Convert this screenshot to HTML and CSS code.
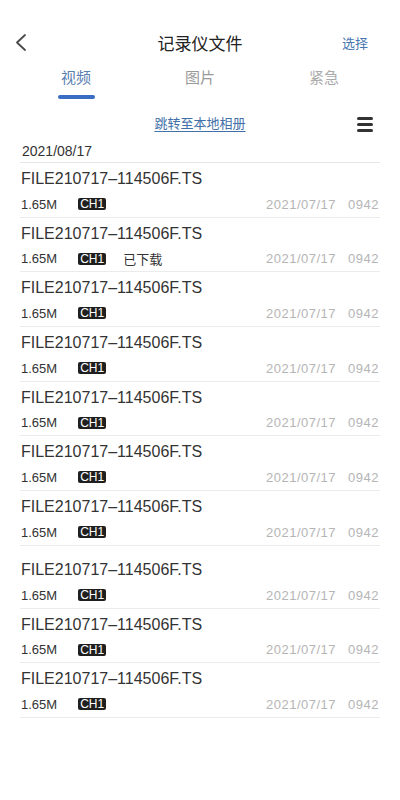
FILE: index.html
```html
<!DOCTYPE html>
<html lang="zh-CN">
<head>
    <meta charset="UTF-8">
    <title>记录仪文件</title>
    <link rel="stylesheet" href="styles.css">
</head>
<body>
<div id="page">
    <div class="nav">
        <a class="back">
            <svg width="11" height="17" viewBox="0 0 11 17"><path d="M10 1 L2 8.5 L10 16" fill="none" stroke="#4a4a4a" stroke-width="1.8" stroke-linecap="round" stroke-linejoin="round"/></svg>
        </a>
        <div class="title">记录仪文件</div>
        <a class="select">选择</a>
    </div>
    <div class="tabs">
        <div class="tab active">视频<i></i></div>
        <div class="tab">图片</div>
        <div class="tab light">紧急</div>
    </div>
    <div class="link-row">
        <span></span>
        <a class="album">跳转至本地相册</a>
        <div class="menu"><i></i><i></i><i></i></div>
    </div>
    <div class="day">2021/08/17</div>
    <div id="list"></div>
</div>
<script>
var files = [
  { dl: false }, { dl: true }, { dl: false }, { dl: false }, { dl: false },
  { dl: false }, { dl: false }, { dl: false, gap: true }, { dl: false }, { dl: false }
];
var list = document.getElementById('list');
files.forEach(function (f) {
  var row = document.createElement('div');
  row.className = 'file-row' + (f.gap ? ' gap' : '');
  row.innerHTML =
    '<div class="name">FILE210717–114506F.TS</div>' +
    '<div class="meta">' +
      '<span class="size">1.65M</span>' +
      '<span class="ch">CH1</span>' +
      (f.dl ? '<span class="dl">已下载</span>' : '') +
      '<span class="time"><span>2021/07/17</span><span>0942</span></span>' +
    '</div>';
  list.appendChild(row);
});
</script>
</body>
</html>
```

FILE: styles.css
```css
* {
    margin: 0;
    padding: 0;
    box-sizing: border-box;
}
html, body {
    height: 100%;
    background: #fff;
}
body {
    font-family: "Liberation Sans", "Noto Sans CJK SC", sans-serif;
    color: #333;
}
.nav {
    display: grid;
    grid-template-columns: 1fr auto 1fr;
    align-items: center;
    height: 64px;
    padding: 20px 15px 0;
}
.back svg {
    display: block;
}
.title {
    font-size: 17px;
    color: #222;
}
.select {
    justify-self: end;
    margin-right: 17px;
    font-size: 13px;
    color: #4a76b0;
}
.tabs {
    display: grid;
    grid-template-columns: repeat(3, 1fr);
    padding: 4px 14px 0;
    height: 36px;
}
.tab {
    display: flex;
    flex-direction: column;
    align-items: center;
    font-size: 15px;
    line-height: 20px;
    color: #9a9a9a;
}
.tab.light {
    color: #ababab;
}
.tab.active {
    color: #5a7fb2;
}
.tab i {
    width: 37px;
    height: 4px;
    margin-top: 7px;
    border-radius: 2px;
    background: #3b6cc4;
}
.link-row {
    display: grid;
    grid-template-columns: 1fr auto 1fr;
    align-items: center;
    padding: 14px 27px 0;
    line-height: 20px;
}
.album {
    font-size: 13px;
    color: #4170a8;
    text-decoration: underline;
    text-underline-offset: 3px;
    text-decoration-thickness: 1px;
}
.menu {
    justify-self: end;
    display: flex;
    flex-direction: column;
    gap: 3px;
}
.menu i {
    width: 16px;
    height: 3px;
    border-radius: 1.5px;
    background: #333;
}
.day {
    margin: 0 20px;
    padding: 7px 2px 1px;
    font-size: 14px;
    line-height: 20px;
    color: #333;
    border-bottom: 1px solid #e6e6e6;
}
.file-row {
    margin: 0 20px;
    padding: 6px 1px 2.7px;
    border-bottom: 1px solid #ebebeb;
}
.file-row.gap {
    padding-top: 14.3px;
}
.name {
    font-size: 16px;
    line-height: 20px;
    color: #333;
}
.meta {
    display: flex;
    align-items: center;
    height: 20px;
    margin-top: 5px;
    font-size: 13px;
}
.size {
    color: #333;
}
.ch {
    margin-left: 21px;
    padding: 0 2px;
    font-size: 12px;
    line-height: 12px;
    color: #fff;
    background: #1f1f1f;
    border-radius: 2px;
}
.dl {
    margin-left: 17px;
    color: #333;
}
.time {
    margin-left: auto;
    display: flex;
    gap: 12px;
    color: #b5b5b5;
    letter-spacing: 0.5px;
}
```
